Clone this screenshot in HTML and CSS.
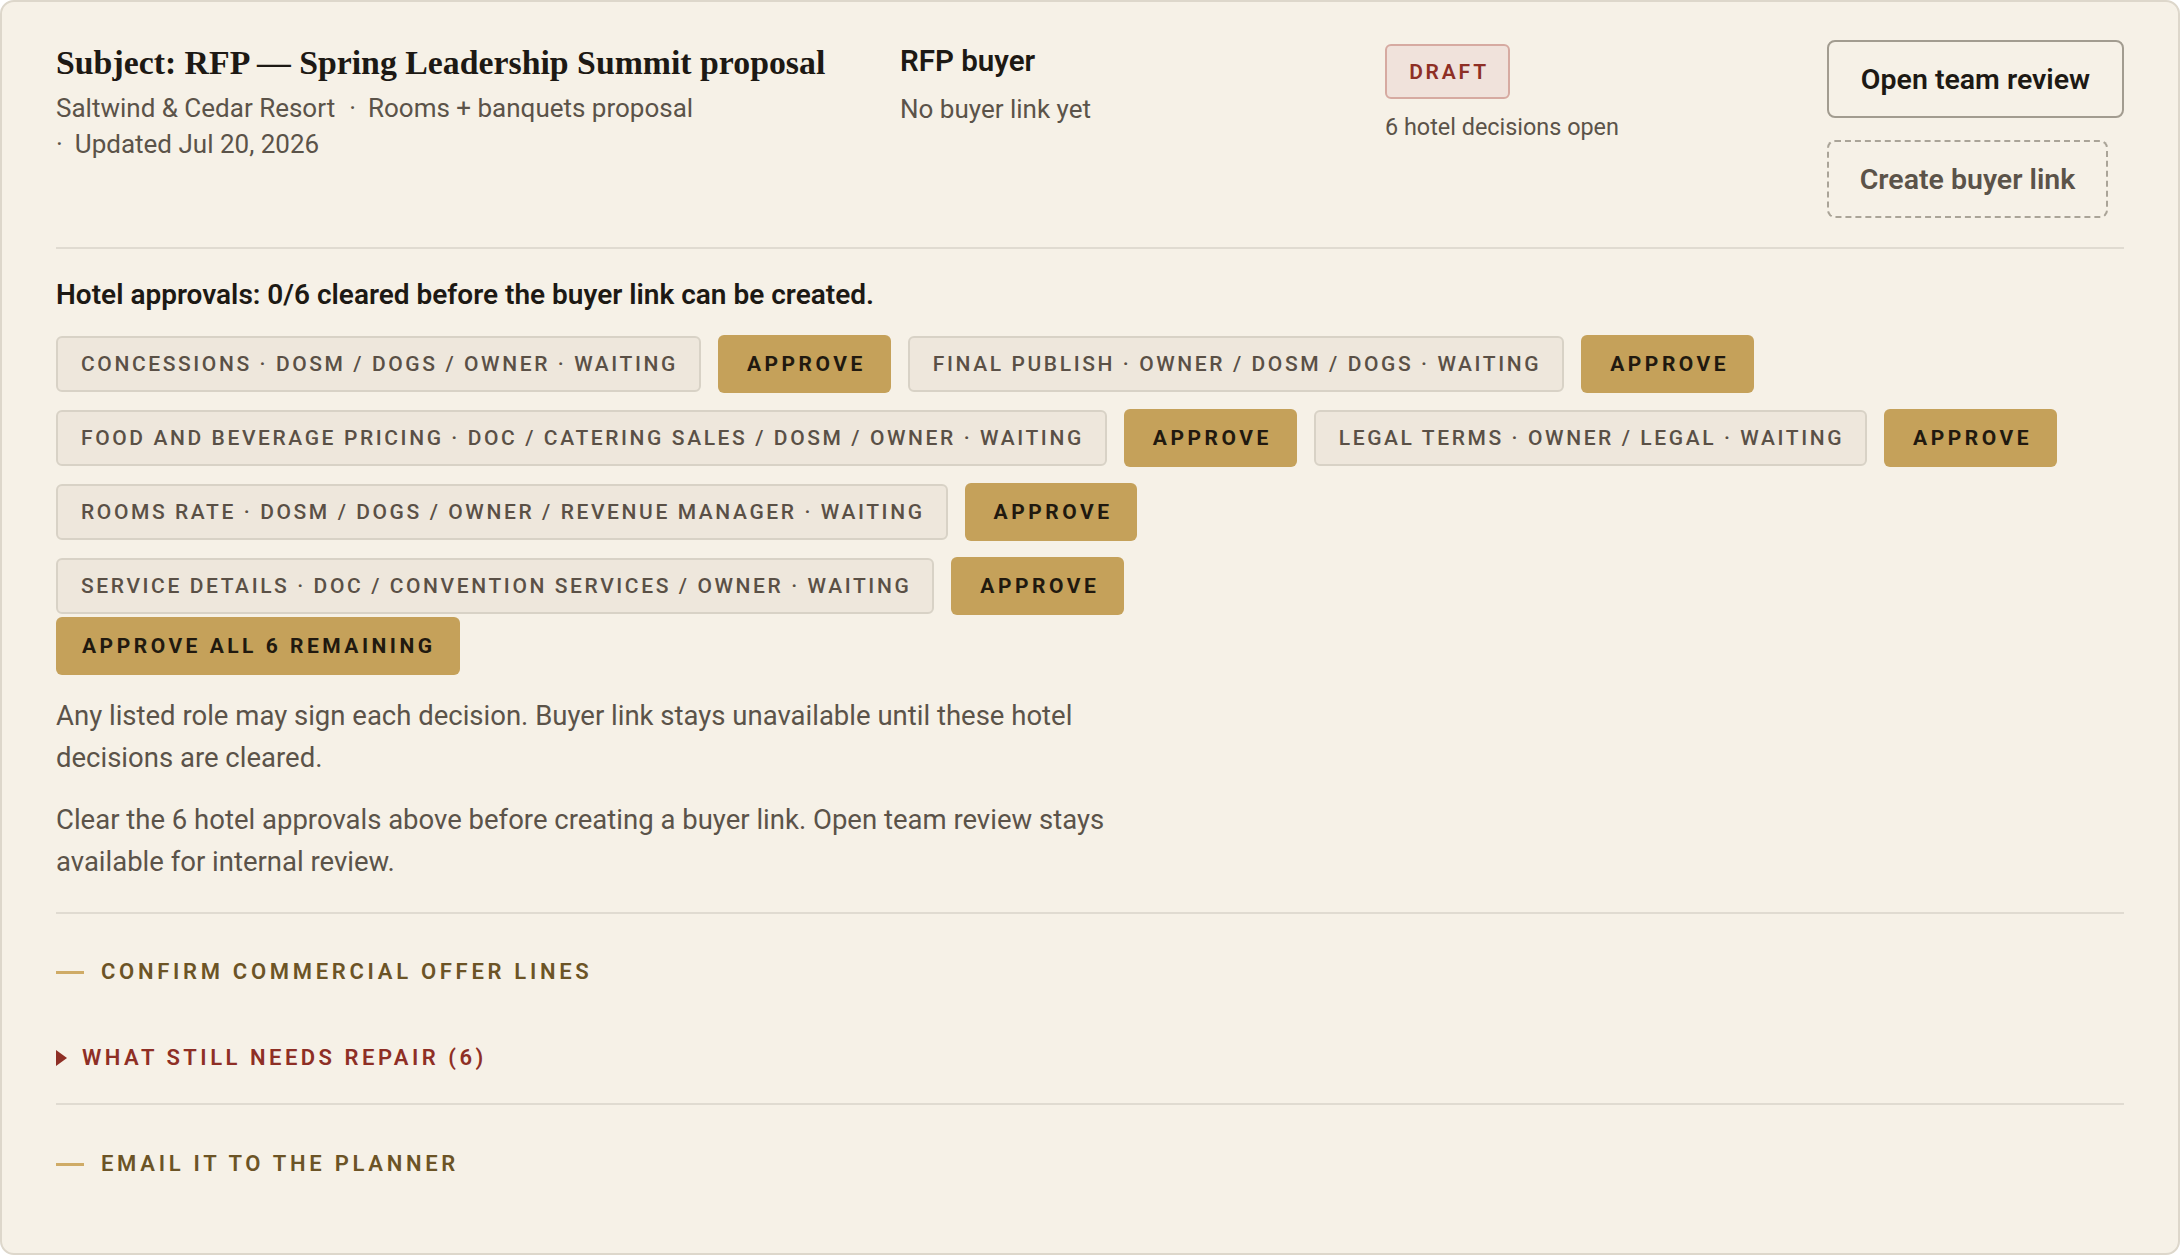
FILE: index.html
```html
<!DOCTYPE html>
<html lang="en">
<head>
<meta charset="utf-8">
<title>RFP — Spring Leadership Summit proposal</title>
<link rel="stylesheet" href="styles.css">
</head>
<body>
<main class="card">
  <header class="head">
    <div class="col-main">
      <h1 class="title">Subject: RFP — Spring Leadership Summit proposal</h1>
      <div class="meta">
        <span class="meta-item">Saltwind &amp; Cedar Resort</span>
        <span class="meta-item"><span class="sep">·</span>Rooms + banquets proposal</span>
        <span class="meta-item"><span class="sep">·</span>Updated Jul 20, 2026</span>
      </div>
    </div>
    <div class="col-buyer">
      <div class="buyer-label">RFP buyer</div>
      <div class="buyer-sub">No buyer link yet</div>
    </div>
    <div class="col-status">
      <span class="badge">DRAFT</span>
      <div class="status-note">6 hotel decisions open</div>
    </div>
    <div class="col-actions">
      <button class="btn btn-solid" type="button">Open team review</button>
      <button class="btn btn-dashed" type="button">Create buyer link</button>
    </div>
  </header>

  <hr class="rule">

  <section class="approvals">
    <h2 class="approvals-title">Hotel approvals: 0/6 cleared before the buyer link can be created.</h2>
    <div class="chips">
      <div class="pair"><span class="chip">Concessions · DOSM / DOGS / Owner · Waiting</span><button class="approve" type="button">Approve</button></div>
      <div class="pair"><span class="chip">Final publish · Owner / DOSM / DOGS · Waiting</span><button class="approve" type="button">Approve</button></div>
      <div class="pair"><span class="chip">Food and beverage pricing · DOC / Catering Sales / DOSM / Owner · Waiting</span><button class="approve" type="button">Approve</button></div>
      <div class="pair"><span class="chip">Legal terms · Owner / Legal · Waiting</span><button class="approve" type="button">Approve</button></div>
      <div class="pair"><span class="chip">Rooms rate · DOSM / DOGS / Owner / Revenue Manager · Waiting</span><button class="approve" type="button">Approve</button></div>
      <div class="pair"><span class="chip">Service details · DOC / Convention Services / Owner · Waiting</span><button class="approve" type="button">Approve</button></div>
    </div>
    <button class="approve approve-all" type="button">Approve all 6 remaining</button>
    <p class="note">Any listed role may sign each decision. Buyer link stays unavailable until these hotel decisions are cleared.</p>
    <p class="note note-2">Clear the 6 hotel approvals above before creating a buyer link. Open team review stays available for internal review.</p>
  </section>

  <hr class="rule rule-2">

  <section class="step step-confirm">
    <h3 class="step-title"><span class="dash"></span>Confirm commercial offer lines</h3>
    <div class="repair"><span class="tri"></span>What still needs repair (6)</div>
  </section>

  <hr class="rule rule-3">

  <section class="step step-email">
    <h3 class="step-title"><span class="dash"></span>Email it to the planner</h3>
  </section>
</main>
</body>
</html>
```

FILE: styles.css
```css
* { box-sizing: border-box; }

html, body {
  margin: 0;
  padding: 0;
  background: #ffffff;
}

body {
  font-family: Roboto, "Liberation Sans", Arial, sans-serif;
  color: #1f1a14;
}

.card {
  width: 2180px;
  height: 1255px;
  background: #f6f1e7;
  border: 2px solid #ddd7cb;
  border-radius: 14px;
  padding: 38px 54px 0 54px;
}

/* ---------- header ---------- */
.head {
  display: grid;
  grid-template-columns: 804px 445px 402px auto;
  column-gap: 40px;
  align-items: start;
  padding-bottom: 29px;
}

.title {
  margin: 0;
  font-family: "Liberation Serif", "Times New Roman", serif;
  font-weight: 700;
  font-size: 33.8px;
  line-height: 46px;
  color: #1d1914;
  white-space: nowrap;
}

.meta {
  display: flex;
  flex-wrap: wrap;
  column-gap: 14px;
  margin-top: 4px;
  font-size: 26px;
  line-height: 36px;
  color: #5b5349;
}

.sep {
  margin-right: 12px;
}

.buyer-label {
  font-size: 29.5px;
  line-height: 42px;
  font-weight: 600;
  color: #1d1914;
}

.buyer-sub {
  margin-top: 9px;
  font-size: 26px;
  line-height: 36px;
  color: #5b5349;
}

.col-status {
  padding-top: 4px;
}

.badge {
  display: inline-flex;
  align-items: center;
  justify-content: center;
  width: 125px;
  height: 55px;
  background: #f0e2db;
  border: 2px solid #d6aaa1;
  border-radius: 6px;
  color: #8e2f25;
  font-size: 21px;
  font-weight: 600;
  letter-spacing: 2.8px;
  padding-left: 3px;
}

.status-note {
  margin-top: 12px;
  font-size: 23.4px;
  line-height: 32px;
  color: #5b5349;
}

.col-actions {
  display: flex;
  flex-direction: column;
  align-items: flex-start;
  gap: 22px;
}

.btn {
  font-family: inherit;
  height: 78px;
  padding: 0;
  border-radius: 8px;
  background: transparent;
  font-size: 28.5px;
  font-weight: 600;
  cursor: pointer;
}

.btn-solid {
  width: 297px;
  border: 2px solid #a29c90;
  color: #1d1914;
}

.btn-dashed {
  width: 281px;
  border: 2px dashed #aaa498;
  color: #5b5349;
}

/* ---------- rules ---------- */
.rule {
  margin: 0;
  border: 0;
  height: 2px;
  background: #e0dbd1;
}

/* ---------- approvals ---------- */
.approvals-title {
  margin: 28px 0 0;
  font-size: 28px;
  line-height: 36px;
  font-weight: 600;
  color: #1d1914;
}

.chips {
  display: flex;
  flex-wrap: wrap;
  gap: 16px 17px;
  margin-top: 22px;
  align-items: center;
}

.pair {
  display: flex;
  gap: 17px;
  align-items: center;
}

.chip {
  display: inline-flex;
  align-items: center;
  height: 56px;
  padding: 0 21px 0 23px;
  background: #eee7dc;
  border: 2px solid #d8d2c6;
  border-radius: 6px;
  color: #5a5046;
  font-size: 21px;
  font-weight: 500;
  letter-spacing: 2.6px;
  text-transform: uppercase;
  white-space: nowrap;
}

.approve {
  font-family: inherit;
  height: 58px;
  padding: 0 25px 0 29px;
  border: 0;
  border-radius: 6px;
  background: #c5a15a;
  color: #21190f;
  font-size: 21px;
  font-weight: 700;
  letter-spacing: 3.5px;
  text-transform: uppercase;
  white-space: nowrap;
  cursor: pointer;
}

.approve-all {
  display: block;
  margin-top: 2px;
  padding: 0 24px 0 26px;
}

.note {
  margin: 20px 0 0;
  max-width: 1120px;
  font-size: 27.5px;
  line-height: 42px;
  color: #5b5349;
}

.note-2 {
  margin-top: 20px;
}

.rule-2 {
  margin-top: 29px;
}

/* ---------- steps ---------- */
.step-title {
  display: flex;
  align-items: center;
  gap: 17px;
  margin: 0;
  font-size: 22px;
  line-height: 30px;
  font-weight: 600;
  letter-spacing: 3.7px;
  text-transform: uppercase;
  color: #6c5426;
}

.dash {
  display: inline-block;
  width: 28px;
  height: 3px;
  background: #cfab66;
}

.step-confirm {
  padding-top: 43px;
}

.repair {
  display: flex;
  align-items: center;
  gap: 15px;
  margin-top: 56px;
  font-size: 22px;
  line-height: 30px;
  font-weight: 600;
  letter-spacing: 3.5px;
  text-transform: uppercase;
  color: #8e2f25;
}

.tri {
  width: 0;
  height: 0;
  border-left: 11px solid #8e2f25;
  border-top: 8px solid transparent;
  border-bottom: 8px solid transparent;
}

.rule-3 {
  margin-top: 30px;
}

.step-email {
  padding-top: 44px;
}
```
